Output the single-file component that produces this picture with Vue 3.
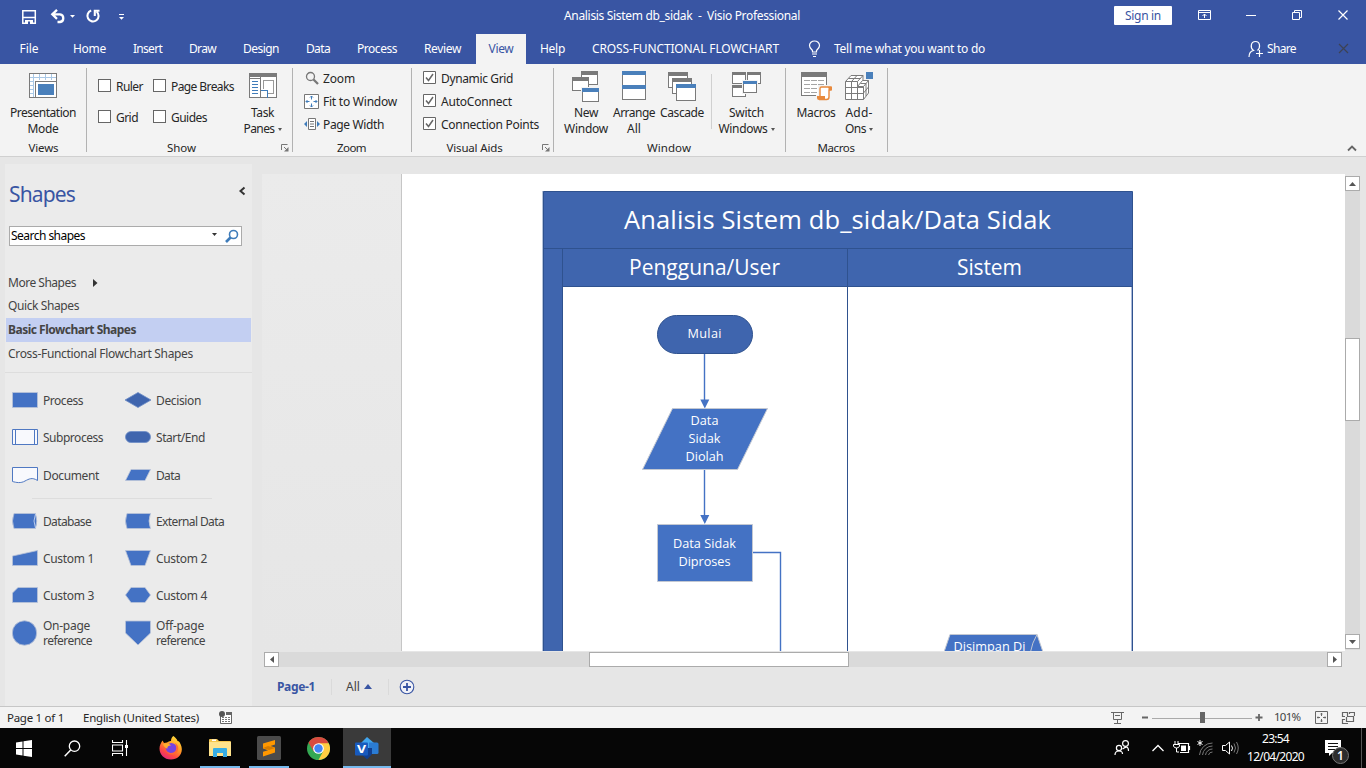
<script setup>
const fit = (el, w) => {
  const apply = () => {
    el.style.letterSpacing = '0px'
    const natural = el.getBoundingClientRect().width
    el.style.letterSpacing = `${(w - natural) / el.textContent.length}px`
  }
  apply()
  if (document.fonts && document.fonts.ready) document.fonts.ready.then(apply)
}
const vFit = { mounted: (el, { value }) => fit(el, value) }

const tabs = [
  { name: 'File', cell: 58, w: 19 },
  { name: 'Home', cell: 63, w: 33 },
  { name: 'Insert', cell: 53, w: 29 },
  { name: 'Draw', cell: 57, w: 27 },
  { name: 'Design', cell: 60, w: 36 },
  { name: 'Data', cell: 54, w: 24 },
  { name: 'Process', cell: 64, w: 40 },
  { name: 'Review', cell: 67, w: 37 },
  { name: 'View', cell: 50, w: 25, active: true },
  { name: 'Help', cell: 53, w: 25 },
  { name: 'CROSS-FUNCTIONAL FLOWCHART', cell: 213, w: 187 },
]
const showChecks = [
  { name: 'Ruler', w: 27 }, { name: 'Page Breaks', w: 63 },
  { name: 'Grid', w: 22 }, { name: 'Guides', w: 36 },
]
const aids = [
  { name: 'Dynamic Grid', w: 72 }, { name: 'AutoConnect', w: 71 }, { name: 'Connection Points', w: 98 },
]
const stencilsTop = [
  { id: 'process', name: 'Process', w: 40 }, { id: 'decision', name: 'Decision', w: 45 },
  { id: 'sub', name: 'Subprocess', w: 60 }, { id: 'start', name: 'Start/End', w: 49 },
  { id: 'doc', name: 'Document', w: 56 }, { id: 'data', name: 'Data', w: 24 },
]
const stencilsBottom = [
  { id: 'db', name: 'Database', w: 48 }, { id: 'ext', name: 'External Data', w: 68 },
  { id: 'c1', name: 'Custom 1', w: 51 }, { id: 'c2', name: 'Custom 2', w: 51 },
  { id: 'c3', name: 'Custom 3', w: 51 }, { id: 'c4', name: 'Custom 4', w: 51 },
]
const paths = {
  process: 'M.5 5.500H25.500V20.500H.500Z',
  decision: 'M0 13L13 5.500L26 13L13 20.500Z',
  start: 'M6 7.500H20A5.500 5.500 0 0 1 20 18.500H6A5.500 5.500 0 0 1 6 7.500Z',
  data: 'M6 7.500H25.500L20 18.500H.500Z',
  ext: 'M2 5.500H25.500Q22.500 13 25.500 20.500H2Q-1 13 2 5.500Z',
  c1: 'M.5 11L25.500 5.500V20.500H.500Z',
  c2: 'M.5 5.500H25.500L20 20.500H6Z',
  c3: 'M6 5.500H25.500V20.500H.500V11Z',
  c4: 'M6 5.500H20L25.500 13L20 20.500H6L.500 13Z',
}
</script>

<template>
  <div class="app">
    <header class="titlebar">
      <svg class="quick" width="130" height="32" viewBox="0 0 130 32">
        <g fill="none" stroke="#fff">
          <path d="M22.800 10.700H35.300M23 17.500H35M22.800 10V23.200H35.300V10" stroke-width="1.500" />
          <path d="M25 20H33V24H25Z" fill="#fff" stroke="none" />
          <path d="M28 21.500H30V24H28Z" fill="#3955a3" stroke="none" />
          <path d="M52.500 14.300H60A3.900 3.900 0 0 1 60 22H57.500M57 9.800L52.300 14.300L57 18.800" stroke-width="2.300" />
          <path d="M91.200 10.600A5.600 5.600 0 1 0 96.700 11.700M99.500 10.800H94.800V16" stroke-width="2.100" />
          <path d="M119 14.500H124" />
        </g>
        <path d="M70 15H75L72.500 17.700ZM119 17H124L121.500 19.700Z" fill="#fff" />
      </svg>
      <div class="doc-title"><span v-fit="236">Analisis Sistem db_sidak&nbsp; -&nbsp; Visio Professional</span></div>
      <div class="signin"><span v-fit="36">Sign in</span></div>
      <svg class="winctl" width="180" height="32" viewBox="1186 0 180 32" fill="none" stroke="#fff">
        <path d="M1198.500 10.500H1210.500V19.500H1198.500ZM1198.500 12.500H1210.500M1204.500 18V14M1202.500 16L1204.500 14L1206.500 16" />
        <path d="M1246 15.500H1256" />
        <path d="M1292.500 12.500H1299.500V19.500H1292.500ZM1294.500 12V10.500H1301.500V17.500H1300" />
        <path d="M1338.500 10.500L1347.500 19.500M1347.500 10.500L1338.500 19.500" stroke-width="1.200" />
      </svg>
    </header>

    <nav class="tabs">
      <div v-for="t in tabs" :key="t.name" class="tab" :class="{ active: t.active }" :style="{ width: t.cell + 'px' }">
        <span v-fit="t.w">{{ t.name }}</span>
      </div>
      <div class="tell">
        <svg width="13" height="18" viewBox="0 0 13 18" fill="none" stroke="#fff">
          <path d="M4.500 12V10.500C3.500 9 1.500 8 1.500 5.500A5 4.500 0 0 1 11.500 5.500C11.500 8 9.500 9 8.500 10.500V12ZM4 14H9M5 16.500H8" stroke-width="1.200" />
        </svg>
        <span v-fit="151">Tell me what you want to do</span>
      </div>
      <div class="share">
        <svg width="16" height="18" viewBox="0 0 16 18" fill="none" stroke="#fff">
          <path d="M1 17C1 13 3 11 5.500 10.500C2 8 2.500 1.500 7.500 1.500C12.500 1.500 12.500 8 9.500 10.500M8 13.500H15M11.500 10V17" stroke-width="1.200" />
        </svg>
        <span v-fit="29">Share</span>
        <svg class="close2" width="11" height="11" viewBox="0 0 11 11"><path d="M1 1L10 10M10 1L1 10" stroke="#3d4254" stroke-width="1.200" /></svg>
      </div>
    </nav>

    <section class="ribbon">
      <div class="group g-views">
        <div class="content">
          <div class="big">
            <svg width="28" height="32" viewBox="0 0 28 32" shape-rendering="crispEdges">
              <path d="M.5 1.500H27.500V25.500H.500Z" fill="#fff" stroke="#7a7a7a" />
              <path d="M1 5.500H27M1 9.500H5M1 13.500H5M1 17.500H5M1 21.500H5M4.500 2V25M10.500 2V8M16.500 2V8M22.500 2V8" stroke="#a9c8e6" />
              <path d="M6.500 9.500H27.500V25.500H6.500Z" fill="#fff" stroke="#7a7a7a" />
              <path d="M9 12H25V23H9Z" fill="#4a80bb" />
            </svg>
            <div class="line"><span v-fit="66">Presentation</span></div>
            <div class="line"><span v-fit="31">Mode</span></div>
          </div>
        </div>
        <div class="caption"><span v-fit="30">Views</span></div>
      </div>

      <div class="group g-show">
        <div class="content">
          <div class="checks">
            <label v-for="c in showChecks" :key="c.name" class="check"><i class="box"></i><span v-fit="c.w">{{ c.name }}</span></label>
          </div>
          <div class="big panes">
            <svg width="28" height="32" viewBox="0 0 28 32" shape-rendering="crispEdges">
              <path d="M.5 1.500H27.500V25.500H.500Z" fill="#fff" stroke="#7a7a7a" />
              <path d="M0 1H28V5H0Z" fill="#7a7a7a" />
              <path d="M11.500 5V25M0 6H11" stroke="#7a7a7a" />
              <path d="M3 9.500H9M3 12.500H9M3 15.500H9M3 18.500H9M3 21.500H9" stroke="#3f7cba" />
              <path d="M14.500 17V8.500H24.500V21.500H19" fill="none" stroke="#999" />
              <path d="M11.500 18.500H18.500V25.500" fill="none" stroke="#3f7cba" />
            </svg>
            <div class="line"><span v-fit="23">Task</span></div>
            <div class="line"><span v-fit="31">Panes</span><i class="caret"></i></div>
          </div>
        </div>
        <div class="caption"><span v-fit="29">Show</span></div>
        <svg class="launcher" width="8" height="8" viewBox="0 0 8 8"><path d="M.5 6V.500H6.500M3 3L6 6" fill="none" stroke="#777" /><path d="M7.500 3V7.500H3Z" fill="#777" /></svg>
      </div>

      <div class="group g-zoom">
        <div class="content rows">
          <div class="row">
            <svg width="16" height="16" viewBox="0 0 16 16"><circle cx="6.500" cy="5.500" r="4" fill="none" stroke="#777" stroke-width="1.300" /><path d="M9.500 8.500L14 13" stroke="#777" stroke-width="2.300" /></svg>
            <span v-fit="32">Zoom</span>
          </div>
          <div class="row">
            <svg width="16" height="16" viewBox="0 0 16 16"><path d="M.5.500H14.500V14.500H.500Z" fill="#fff" stroke="#777" /><path d="M7.500 2V5.500M6 3.500L7.500 2L9 3.500M7.500 13V9.500M6 11.500L7.500 13L9 11.500M2 7.500H5.500M3.500 6L2 7.500L3.500 9M13 7.500H9.500M11.500 6L13 7.500L11.500 9" fill="none" stroke="#3f7cba" /></svg>
            <span v-fit="74">Fit to Window</span>
          </div>
          <div class="row">
            <svg width="16" height="16" viewBox="0 0 16 16"><path d="M4.500 1.500H11.500V12.500H4.500Z" fill="#fff" stroke="#777" /><path d="M6 4.500H10M6 7H10M6 9.500H10" stroke="#777" /><path d="M3 4V10L0 7ZM13 4V10L16 7Z" fill="#3f7cba" /></svg>
            <span v-fit="61">Page Width</span>
          </div>
        </div>
        <div class="caption"><span v-fit="29">Zoom</span></div>
      </div>

      <div class="group g-aids">
        <div class="content rows">
          <label v-for="a in aids" :key="a.name" class="row">
            <svg class="box" width="13" height="13" viewBox="0 0 13 13"><path d="M.5.500H12.500V12.500H.500Z" fill="#fff" stroke="#666" /><path d="M3 6.500L5.500 9.500L10 3" fill="none" stroke="#666" stroke-width="1.500" /></svg>
            <span v-fit="a.w">{{ a.name }}</span>
          </label>
        </div>
        <div class="caption"><span v-fit="56">Visual Aids</span></div>
        <svg class="launcher" width="8" height="8" viewBox="0 0 8 8"><path d="M.5 6V.500H6.500M3 3L6 6" fill="none" stroke="#777" /><path d="M7.500 3V7.500H3Z" fill="#777" /></svg>
      </div>

      <div class="group g-window">
        <div class="content">
          <div class="big b-new">
            <svg width="28" height="32" viewBox="0 0 28 32" shape-rendering="crispEdges">
              <g fill="#fff" stroke="#7a7a7a"><path d="M9.500-.500H25.500V12.500H9.500Z" /><path d="M.5 5.500H16.500V18.500H.500Z" /></g>
              <path d="M9-1H26V3H9ZM0 5H17V9H0Z" fill="#7a7a7a" />
              <path d="M9 15H28V31H9Z" fill="#f3f3f3" />
              <path d="M10.500 16.500H26.500V29.500H10.500Z" fill="#fff" stroke="#7a7a7a" /><path d="M10 16H27V20H10Z" fill="#4a80bb" />
            </svg>
            <div class="line"><span v-fit="24">New</span></div>
            <div class="line"><span v-fit="44">Window</span></div>
          </div>
          <div class="big b-arr">
            <svg width="24" height="32" viewBox="0 0 24 32" shape-rendering="crispEdges">
              <path d="M.5-.500H23.500V27.500H.500Z" fill="#fff" stroke="#7a7a7a" /><path d="M0-1H24V3H0ZM0 13H24V17H0Z" fill="#4a80bb" />
            </svg>
            <div class="line"><span v-fit="42">Arrange</span></div>
            <div class="line"><span v-fit="14">All</span></div>
          </div>
          <div class="big b-cas">
            <svg width="28" height="32" viewBox="0 0 28 32" shape-rendering="crispEdges">
              <g fill="#fff" stroke="#7a7a7a"><path d="M.5.500H19.500V15.500H.500Z" /><path d="M4.500 6.500H23.500V21.500H4.500Z" /><path d="M8.500 12.500H27.500V28.500H8.500Z" /></g>
              <path d="M0 0H20V4H0ZM4 6H24V10H4Z" fill="#7a7a7a" /><path d="M8 12H28V16H8Z" fill="#4a80bb" />
            </svg>
            <div class="line"><span v-fit="44">Cascade</span></div>
          </div>
          <i class="minisep"></i>
          <div class="big b-sw">
            <svg width="30" height="32" viewBox="0 0 30 32" shape-rendering="crispEdges">
              <g fill="#fff" stroke="#7a7a7a"><path d="M.5.500H13.500V11.500H.500Z" /><path d="M15.500.500H28.500V11.500H15.500Z" /><path d="M.5 13.500H13.500V24.500H.500Z" /></g>
              <path d="M0 0H14V3H0ZM15 0H29V3H15ZM0 13H14V16H0Z" fill="#7a7a7a" />
              <path d="M10 8H26V22H10Z" fill="#f3f3f3" />
              <path d="M11.500 9.500H24.500V20.500H11.500Z" fill="#fff" stroke="#7a7a7a" /><path d="M11 9H25V12H11Z" fill="#4a80bb" />
            </svg>
            <div class="line"><span v-fit="35">Switch</span></div>
            <div class="line"><span v-fit="49">Windows</span><i class="caret"></i></div>
          </div>
        </div>
        <div class="caption"><span v-fit="44">Window</span></div>
      </div>

      <div class="group g-macros">
        <div class="content">
          <div class="big b-mac">
            <svg width="31" height="32" viewBox="0 0 31 32">
              <g shape-rendering="crispEdges">
                <path d="M.5.500H25.500V23.500H.500Z" fill="#fff" stroke="#7a7a7a" /><path d="M0 0H26V5H0Z" fill="#7a7a7a" />
                <path d="M3 8.500H24M3 12.500H24M3 16.500H24M3 20.500H16" stroke="#a5a5a5" stroke-dasharray="6 1" />
              </g>
              <path d="M17 13H31V29H15V23H17Z" fill="#f3f3f3" />
              <path d="M19 25V16.500Q19 15 20.500 15H30V18H28V25Q28 27.500 25.500 27.500H18" fill="#fff" stroke="#e8893c" stroke-width="1.400" />
              <path d="M16 24H24V28H18Q16 28 16 26ZM27 15H31V18H28Z" fill="#e8893c" />
            </svg>
            <div class="line"><span v-fit="39">Macros</span></div>
          </div>
          <div class="big b-add">
            <svg width="28" height="32" viewBox="0 0 28 32">
              <path d="M.5 9.500L6 3.500H18.500L19 8.500H24.500L23.500 21.500L18.500 27.500H.500Z" fill="#fff" />
              <path d="M.5 9.500H12.500V14.500H18.500V27.500H.500ZM.5 15.500H18M.5 21.500H18.500M6.500 9.500V27.500M12.500 14.500V27.500M.5 9.500L6 3.500H18M12.500 9.500L18 3.500V8.500M6.500 9.500L12 3.500M3.500 6.500H15.500M12.500 14.500L17.500 8.500H23.500V21L18.500 27.500M18.500 14.500L23.500 8.500M15.500 11.500H21V24M18.500 21L23.500 15" fill="none" stroke="#7a7a7a" />
              <path d="M21 0H28V7H21Z" fill="#4a80bb" />
            </svg>
            <div class="line"><span v-fit="27">Add-</span></div>
            <div class="line"><span v-fit="21">Ons</span><i class="caret"></i></div>
          </div>
        </div>
        <div class="caption"><span v-fit="37">Macros</span></div>
      </div>
      <svg class="collapse" width="10" height="7" viewBox="0 0 10 7"><path d="M1 5.500L5 1.500L9 5.500" fill="none" stroke="#666" stroke-width="1.800" /></svg>
    </section>

    <main class="work">
      <aside class="shapes">
        <div class="head">
          <span v-fit="66" class="h">Shapes</span>
          <svg width="8" height="10" viewBox="0 0 8 10"><path d="M6.500 1.500L2.500 5L6.500 8.500" fill="none" stroke="#333" stroke-width="2" /></svg>
        </div>
        <div class="search">
          <span v-fit="74">Search shapes</span>
          <svg width="30" height="16" viewBox="0 0 30 16"><path d="M2 5H7L4.500 8Z" fill="#333" /><circle cx="23.500" cy="6.500" r="4" fill="none" stroke="#3f7cba" stroke-width="1.600" /><path d="M20.500 9.500L16 14" stroke="#3f7cba" stroke-width="2.600" /></svg>
        </div>
        <div class="stencils">
          <div class="st"><span v-fit="68">More Shapes</span><svg width="5" height="8" viewBox="0 0 5 8"><path d="M0 0L4.500 4L0 8Z" fill="#333" /></svg></div>
          <div class="st"><span v-fit="71">Quick Shapes</span></div>
          <div class="st on"><span v-fit="128">Basic Flowchart Shapes</span></div>
          <div class="st"><span v-fit="185">Cross-Functional Flowchart Shapes</span></div>
        </div>
        <div class="grid first">
          <div v-for="s in stencilsTop" :key="s.id" class="item">
            <svg width="26" height="26" viewBox="0 0 26 26">
              <g v-if="s.id === 'sub'" fill="#f8f9fd" stroke="#4f78c2"><path d="M.5 5.500H25.500V20.500H.500Z" /><path d="M3.500 5V21M22.500 5V21" /></g>
              <path v-else-if="s.id === 'doc'" d="M.5 5.500H25.500V18.500C20 15 17 17 13 19C9 21.500 4 20.500 .500 19.500Z" fill="#f8f9fd" stroke="#4f78c2" />
              <path v-else :d="paths[s.id]" :class="s.id === 'decision' || s.id === 'start' ? 'deep' : 'plain'" />
            </svg>
            <span v-fit="s.w">{{ s.name }}</span>
          </div>
        </div>
        <div class="grid second">
          <div v-for="s in stencilsBottom" :key="s.id" class="item">
            <svg width="26" height="26" viewBox="0 0 26 26">
              <g v-if="s.id === 'db'"><path d="M2 5.500H23.500Q26 13 23.500 20.500H2Q-1 13 2 5.500Z" class="plain" /><path d="M23.500 6Q20.500 13 23.500 20" fill="none" stroke="#b8cbee" /></g>
              <path v-else :d="paths[s.id]" class="plain" />
            </svg>
            <span v-fit="s.w">{{ s.name }}</span>
          </div>
        </div>
        <div class="grid third">
          <div class="item">
            <svg width="26" height="26" viewBox="0 0 26 26"><circle cx="12.500" cy="13" r="12.200" class="plain" /></svg>
            <div><div><span v-fit="47">On-page</span></div><div><span v-fit="49">reference</span></div></div>
          </div>
          <div class="item">
            <svg width="26" height="26" viewBox="0 0 26 26"><path d="M.5 1H25.500V13L13 25L.500 13Z" class="plain" /></svg>
            <div><div><span v-fit="48">Off-page</span></div><div><span v-fit="49">reference</span></div></div>
          </div>
        </div>
      </aside>

      <div class="editor">
        <div class="viewrow">
          <svg class="canvas" width="1083" height="477" viewBox="262 174 1083 477">
            <defs><linearGradient id="desk" x1="0" y1="0" x2="0" y2="1"><stop offset="0" stop-color="#ebebeb" /><stop offset="1" stop-color="#e6e6e6" /></linearGradient></defs>
            <rect x="262" y="174" width="140" height="477" fill="url(#desk)" />
            <rect x="402" y="174" width="943" height="477" fill="#fff" />
            <path d="M401.500 174V651" stroke="#c6c6c6" />
            <path d="M543 191.500H1132.500V286.500H562.500V651H543Z" fill="#3f65ae" />
            <g fill="none" stroke="#2f528f">
              <path d="M543.500 651V191.500H1132.500V286.500M543 248.500H1132M562.500 651V248.500M562 286.500H1132M847.500 248V651" />
              <path d="M542.500 191V651" stroke="#b4c2da" />
              <path d="M1131.500 287V651" stroke="#a9b9d8" />
              <path d="M1132.500 286V651" />
            </g>
            <rect x="657.500" y="315.500" width="95" height="38" rx="19" fill="#3f65ae" stroke="#2f528f" />
            <g fill="none" stroke="#4472c4" stroke-width="1.400">
              <path d="M704.500 354V402M704.500 469V518M753 552.500H780.500V651" />
            </g>
            <path d="M700.300 399.500H709.300L704.800 408.500ZM700.300 515H709.300L704.800 524Z" fill="#4472c4" />
            <g fill="#4472c4" stroke="#c3c8d2">
              <path d="M672.500 408.500H767.500L737.500 469.500H642.500Z" />
              <path d="M657.500 524.500H752.500V581.500H657.500Z" />
              <path d="M943 655L950 634.500H1037L1044 655Z" />
              <path d="M1037 634.500Q1032 643 1030.500 652" fill="none" />
            </g>
            <g class="dtext">
              <text x="624" y="229" font-size="25.500" textLength="427">Analisis Sistem db_sidak/Data Sidak</text>
              <text x="629" y="275" font-size="21" textLength="151">Pengguna/User</text>
              <text x="957" y="275" font-size="21" textLength="65">Sistem</text>
              <g font-size="12.700" class="body">
                <text x="687.500" y="338" textLength="34">Mulai</text>
                <text x="690.500" y="425" textLength="28">Data</text>
                <text x="688.500" y="443" textLength="32">Sidak</text>
                <text x="685.500" y="461" textLength="38">Diolah</text>
                <text x="673" y="548" textLength="63">Data Sidak</text>
                <text x="678.500" y="566" textLength="52">Diproses</text>
                <text x="953.500" y="651" textLength="72">Disimpan Di</text>
              </g>
            </g>
          </svg>
          <div class="vscroll">
            <div class="sbtn"><svg width="7" height="4" viewBox="0 0 7 4"><path d="M0 4L3.500 0L7 4Z" fill="#555" /></svg></div>
            <div class="vthumb"></div>
            <div class="sbtn"><svg width="7" height="4" viewBox="0 0 7 4"><path d="M0 0L3.500 4L7 0Z" fill="#555" /></svg></div>
          </div>
        </div>
        <div class="hscroll">
          <div class="sbtn"><svg width="4" height="7" viewBox="0 0 4 7"><path d="M4 0L0 3.500L4 7Z" fill="#555" /></svg></div>
          <div class="hthumb"></div>
          <div class="sbtn"><svg width="4" height="7" viewBox="0 0 4 7"><path d="M0 0L4 3.500L0 7Z" fill="#555" /></svg></div>
        </div>
        <div class="pagetabs">
          <span class="pg"><span v-fit="38">Page-1</span></span>
          <span class="all"><span v-fit="14">All</span><svg width="8" height="5" viewBox="0 0 8 5"><path d="M0 5L4 0L8 5Z" fill="#3955a3" /></svg></span>
          <svg width="16" height="16" viewBox="0 0 16 16"><circle cx="8" cy="8" r="6.800" fill="#f1f2f7" stroke="#3955a3" stroke-width="1.100" /><path d="M4 8H12M8 4V12" stroke="#3955a3" stroke-width="1.800" /></svg>
        </div>
      </div>
    </main>

    <footer class="status">
      <span class="s1"><span v-fit="57">Page 1 of 1</span></span>
      <span class="s2"><span v-fit="116">English (United States)</span></span>
      <svg class="rec" width="13" height="13" viewBox="0 0 13 13"><path d="M1.500 5V12.500H12.500V1.500H7" fill="#fff" stroke="#666" /><path d="M7 1H13V4H7Z" fill="#666" /><circle cx="3" cy="3" r="3" fill="#555" /><path d="M3 6.500H11M3 8.500H11M3 10.500H11" stroke="#777" stroke-dasharray="2 1" /></svg>
      <svg class="zoombar" width="250" height="22" viewBox="1105 706 250 22">
        <g fill="none" stroke="#666">
          <path d="M1111 711.500H1124M1113.500 712V718.500H1121.500V712M1115 714.500H1120M1117.500 719V722.500M1114 722.500H1121" />
          <path d="M1142 716.500H1148M1255.500 716.500H1262.500M1259 713V720" stroke-width="1.800" />
          <path d="M1152 717.500H1252" stroke="#aaa" />
          <path d="M1315.500 710.500H1327.500V722.500H1315.500Z" />
          <path d="M1321.500 712V715M1321.500 721V718M1317 716.500H1320M1326 716.500H1323M1320.500 713H1322.500M1320.500 720H1322.500M1318 715.500V717.500M1325 715.500V717.500" />
          <path d="M1342.500 715.500V711.500H1347.500V715.500M1349.500 713V711.500H1354.500V715M1346.500 716V720.500H1353.500V715.500H1347M1342.500 716V715.500H1345M1345 718.500H1342.500V722.500H1348" stroke-width="1.200" />
        </g>
        <rect x="1200" y="711" width="5" height="11" fill="#666" />
        <text x="1274" y="720" font-size="11.500" textLength="27" fill="#444">101%</text>
      </svg>
    </footer>

    <div class="taskbar">
      <div class="tk"><svg width="16" height="17" viewBox="0 0 16 17"><path d="M0 2.500L6.500 1.500V8H0ZM7.500 1.300L16 0V8H7.500ZM0 9H6.500V15.500L0 14.500ZM7.500 9H16V17L7.500 15.700Z" fill="#fff" /></svg></div>
      <div class="tk"><svg width="17" height="17" viewBox="0 0 17 17"><circle cx="10.500" cy="6.200" r="5.200" fill="none" stroke="#fff" stroke-width="1.300" /><path d="M6.700 10L.700 16.200" stroke="#fff" stroke-width="1.500" /></svg></div>
      <div class="tk"><svg width="17" height="16" viewBox="0 0 17 16"><path d="M.5 0V2.500H10.500V0M.5 5H10.500V11H.500ZM.5 16V13.500H10.500V16M14.500 0V16" fill="none" stroke="#fff" stroke-width="1.100" /><path d="M13 5H16V8H13Z" fill="#fff" /></svg></div>
      <div class="tk gap">
        <svg width="24" height="24" viewBox="0 0 24 24">
          <defs>
            <linearGradient id="fx" x1=".85" y1="0" x2=".3" y2="1"><stop offset="0" stop-color="#ffe83e" /><stop offset=".45" stop-color="#ff9a25" /><stop offset=".75" stop-color="#ff4a42" /><stop offset="1" stop-color="#e3267c" /></linearGradient>
          </defs>
          <path d="M14.500 0C17 2 18 3.500 18.500 5C20 5 20.500 6 21 7C26 16 20 23.500 12 23.500C5 23.500 .500 18.500 .500 12.500C.500 9.500 2 6.500 3.500 4.500L5 7L8 6.500C9.500 5 12 5 12 5C12 2.500 13 1 14.500 0Z" fill="url(#fx)" />
          <circle cx="12.300" cy="12.300" r="5.400" fill="#7543e0" />
          <path d="M4 8.500C7 6.500 9.500 7 12 9.500C9 9.500 8 11 8.500 12.500C6.500 12.500 5 10.500 4 8.500Z" fill="#ffad2e" />
          <path d="M7 14.500C10 18 15 17.500 17 14C18 11 17 8.500 15.500 7C19.500 8 20.500 13.500 17.500 16.800C14 20 8.500 18.500 7 14.500Z" fill="#ff6835" />
        </svg>
      </div>
      <div class="tk run"><svg width="22" height="20" viewBox="0 0 22 20"><path d="M0 2Q0 1 1 1H8L10 3H21Q22 3 22 4V18H0Z" fill="#f5c64e" /><path d="M0 4H22V18H0Z" fill="#ffe38c" /><path d="M3 1.500H7V3H3Z" fill="#fff" /><path d="M4 19V11Q4 10 5 10H17Q18 10 18 11V19H14V15H8V19Z" fill="#37aee5" /></svg></div>
      <div class="tk run"><svg width="24" height="24" viewBox="0 0 24 24"><rect width="24" height="24" rx="1.500" fill="#4b4b4b" /><path d="M6 7.500L18 4V8.500L13.500 10L18 11.500V16.500L6 20.500V15.800L11 14.200L6 12.500Z" fill="#ff9800" /><path d="M6 12L11 10L18 12L12 14Z" fill="#d67c00" /></svg></div>
      <div class="tk"><svg width="23" height="23" viewBox="0 0 24 24"><circle cx="12" cy="12" r="12" fill="#34a853" /><path d="M12 12L1.600 6A12 12 0 0 1 22.400 6Z" fill="#d94b3f" /><path d="M1.600 6L7 15L12 12V6Z" fill="#d94b3f" /><path d="M12 6.500H22.700A12 12 0 0 1 12 24L17 14.500Z" fill="#ffcd42" /><circle cx="12" cy="12" r="5.600" fill="#fff" /><circle cx="12" cy="12" r="4.400" fill="#4285f4" /></svg></div>
      <div class="tk run wide"><svg width="24" height="23" viewBox="0 0 24 23"><path d="M12 0L19 6L12 13L6 6Z" fill="#41a5ee" /><path d="M14 5.500H22Q23.500 5.500 23.500 7V15.500Q23.500 17 22 17H14Z" fill="#2b7cd3" /><path d="M8 11H17V17L13 21.500Q12 22.500 11 21.500L6 17Z" fill="#103f91" /><rect x="0" y="5.500" width="13" height="13" rx="1" fill="#185abd" /><text x="2" y="16" font-size="11" font-weight="700" fill="#fff" textLength="9" lengthAdjust="spacingAndGlyphs">V</text></svg></div>
      <div class="tray">
        <svg width="135" height="40" viewBox="1110 728 135 40" fill="none" stroke="#fff">
          <g stroke-width="1.200"><circle cx="1120" cy="748" r="2.600" /><circle cx="1126.500" cy="743.500" r="2.900" /><path d="M1116 755Q1116 751 1120 751Q1123.500 751 1123.500 754M1123.500 749Q1129.500 744.500 1129.500 751" /></g>
          <path d="M1153.500 751L1159 745.500L1164.500 751" stroke-width="1.300" />
          <path d="M1179 743.500H1189.500V752.500H1181M1190.500 746V750" stroke-width="1.200" /><path d="M1182 745.500H1187V751H1182Z" fill="#fff" stroke="none" /><path d="M1176 741V744M1179 741V744M1174.500 744.500H1180.500V746Q1180 748 1177.500 748Q1175 748 1174.500 746ZM1177.500 748V752H1180" />
          <path d="M1201 740V746M1198.500 741.500L1203.500 744.500M1203.500 741.500L1198.500 744.500" />
          <g stroke="#777"><path d="M1200.500 755A13 13 0 0 1 1213.500 743M1203.500 755A10 10 0 0 1 1213.500 746M1206.500 755A7 7 0 0 1 1213.500 749M1209.500 755A4 4 0 0 1 1213.500 752" /></g>
          <path d="M1223.500 745.500H1226.500L1230.500 742V754L1226.500 750.500H1223.500ZM1232.500 745.500Q1234.500 748 1232.500 751" /><path d="M1235 743.500Q1238 748 1235 752.500M1237.500 742Q1241 748 1237.500 754" stroke="#777" />
        </svg>
        <div class="clock"><div><span v-fit="27">23:54</span></div><div><span v-fit="57">12/04/2020</span></div></div>
        <svg width="58" height="40" viewBox="1308 728 58 40"><path d="M1325 740H1341V753H1332L1329 756V753H1325Z" fill="#fff" /><path d="M1328 743.500H1338M1328 746.500H1338M1328 749.500H1335" stroke="#111" /><circle cx="1340.500" cy="755.500" r="8" fill="#2d2d2d" stroke="#777" /><text x="1337" y="759.500" fill="#fff" font-size="12" font-weight="600">1</text><path d="M1361.500 728V768" stroke="#555" /></svg>
      </div>
    </div>
  </div>
</template>

<style>
body { margin: 0; overflow: hidden; }
</style>
<style scoped>
.app { width: 1366px; height: 768px; display: flex; flex-direction: column; background: #e6e6e6; font-family: "Noto Sans", "Open Sans", sans-serif; font-size: 12px; line-height: 16px; color: #262626; overflow: hidden; }
.app span { white-space: nowrap; }
svg { display: block; flex: none; }
.titlebar { height: 32px; display: flex; align-items: center; background: #3955a3; color: #fff; flex: none; }
.doc-title { margin-left: 434px; width: 550px; }
.signin { width: 58px; height: 19px; background: #fff; color: #3955a3; display: flex; align-items: center; justify-content: center; border-radius: 1px; margin-top: -1px; }
.winctl { margin-left: 14px; }
.tabs { height: 32px; display: flex; align-items: stretch; background: #3955a3; color: #fff; flex: none; }
.tab { display: flex; align-items: center; justify-content: center; padding-top: 1px; box-sizing: border-box; }
.tab.active { background: #f3f3f3; color: #3955a3; height: 30px; margin-top: 2px; padding-top: 0; padding-bottom: 1px; }
.tell { display: flex; align-items: center; gap: 13px; padding-left: 16px; padding-top: 1px; width: 440px; }
.share { display: flex; align-items: center; gap: 3px; padding-top: 1px; }
.close2 { margin-left: 39px; }
.ribbon { height: 92px; display: flex; background: #f3f3f3; border-bottom: 1px solid #d0d0d0; flex: none; position: relative; }
.group { display: flex; flex-direction: column; position: relative; box-sizing: border-box; }
.group::after { content: ""; position: absolute; right: 0; top: 4px; height: 84px; width: 1px; background: #b2b2b2; }
.content { height: 76px; display: flex; flex: none; }
.caption { height: 16px; display: flex; justify-content: center; font-size: 11.500px; }
.g-views { width: 87px; } .g-show { width: 206px; } .g-zoom { width: 119px; } .g-aids { width: 142px; } .g-window { width: 232px; } .g-macros { width: 102px; }
.g-show .caption, .g-aids .caption { padding-right: 17px; }
.g-zoom .caption, .g-window .caption, .g-macros .caption { padding-right: 2px; }
.big { display: flex; flex-direction: column; align-items: center; padding-top: 8px; box-sizing: border-box; }
.big svg { margin-bottom: 1px; overflow: visible; }
.g-views .big { width: 86px; }
.line { display: flex; align-items: center; height: 16px; }
.caret { width: 0; height: 0; border: 2.500px solid transparent; border-top: 3px solid #555; border-bottom: 0; margin-left: 3px; }
.checks { display: grid; grid-template-columns: 55px 90px; grid-auto-rows: 31px; padding: 6px 0 0 11px; height: 62px; }
.check { display: flex; align-items: center; gap: 5px; }
.check span { padding-top: 2px; }
.check .box { width: 11px; height: 11px; border: 1px solid #666; background: #fff; }
.panes { width: 39px; }
.launcher { position: absolute; right: 4px; bottom: 4px; }
.rows { flex-direction: column; padding-top: 3px; box-sizing: border-box; }
.row { height: 23px; display: flex; align-items: center; }
.g-zoom .row { padding-left: 11px; gap: 3px; }
.g-aids .row { padding-left: 11px; gap: 5px; }
.g-aids .row .box { margin-bottom: 2px; }
.b-new { width: 48px; margin-left: 8px; } .b-arr { width: 48px; } .b-cas { width: 48px; }
.minisep { width: 1px; height: 55px; background: #d0d0d0; margin: 10px 5px 0 5px; }
.b-sw { width: 59px; }
.b-mac { width: 42px; margin-left: 9px; } .b-add { width: 30px; margin-left: 7px; }
.collapse { margin: 81px 0 0 459px; }
.work { height: 549px; display: flex; flex: none; padding-left: 5px; }
.shapes { width: 247px; margin-top: 7px; background: #ebebeb; color: #444; flex: none; }
.head { height: 60px; display: flex; align-items: center; justify-content: space-between; padding: 0 6px 0 4px; }
.h { font-size: 21px; color: #3955a3; line-height: 30px; }
.head svg { margin-top: -6px; }
.search { margin: 2px 0 0 4px; height: 18px; border: 1px solid #ababab; background: #fff; display: flex; align-items: center; justify-content: space-between; padding: 0 1px; width: 229px; color: #000; }
.stencils { padding: 25px 1px 6px; border-bottom: 1px solid #ddd; }
.st { height: 24px; display: flex; align-items: center; gap: 17px; padding-left: 2px; }
.st:first-child { height: 23px; }
.st.on { background: #c3cff2; font-weight: 700; }
.grid { display: grid; grid-template-columns: 113px 120px; padding-left: 7px; }
.first { grid-auto-rows: 37.500px; padding-top: 8px; padding-bottom: 4px; }
.second { grid-auto-rows: 37px; padding-top: 5px; position: relative; }
.second::before { content: ""; position: absolute; left: 27px; top: 0; width: 180px; height: 1px; background: #ddd; }
.first .item span, .second .item span { padding-top: 2px; }
.third { padding-top: 4px; line-height: 15px; }
.item { display: flex; align-items: center; gap: 5px; }
.item svg { margin-left: -.5px; margin-right: .5px; }
.plain { fill: #4472c4; stroke: #b9c3d8; stroke-width: .8; }
.deep { fill: #3f65ae; stroke: #6f8ec6; stroke-width: .8; }
.editor { margin-left: 10px; margin-top: 17px; width: 1104px; display: flex; flex-direction: column; }
.viewrow { display: flex; height: 477px; }
.vscroll { width: 15px; height: 474px; margin-top: 2px; background: #dadada; display: flex; flex-direction: column; }
.sbtn { width: 13px; height: 13px; border: 1px solid #ababab; background: #fff; display: flex; align-items: center; justify-content: center; flex: none; }
.vthumb { margin: 147px 0 213px; height: 81px; border: 1px solid #ababab; background: #fff; }
.hscroll { margin: 1px 0 0 2px; width: 1078px; height: 15px; background: #dadada; display: flex; }
.hthumb { margin: 0 478px 0 310px; width: 258px; border: 1px solid #ababab; background: #fff; }
.pagetabs { height: 39px; display: flex; align-items: center; }
.pg { color: #3955a3; font-weight: 700; padding: 0 16px 0 15px; border-right: 1px solid #dadada; }
.all { display: flex; align-items: center; gap: 4px; padding: 0 16px 0 14px; border-right: 1px solid #dadada; margin-right: 10px; color: #444; }
.status { height: 21px; border-top: 1px solid #c6c6c6; background: #f3f3f3; display: flex; align-items: center; flex: none; font-size: 11.500px; }
.s1 { margin-left: 7px; width: 76px; } .s2 { width: 136px; }
.zoombar { margin-left: 873px; }
.taskbar { height: 40px; background: #060606; display: flex; flex: none; color: #fff; }
.tk { width: 48px; height: 40px; display: flex; align-items: center; justify-content: center; margin-right: 1px; position: relative; }
.tk:nth-child(-n+3) { margin-right: 0; }
.gap { margin-left: 3px; }
.run::after { content: ""; position: absolute; left: 4px; right: 4px; bottom: 0; height: 2px; background: #76b9ed; }
.wide { background: #3a3a3a; }
.wide::after { left: 0; right: 0; }
.tray { display: flex; margin-left: auto; }
.clock { width: 63px; text-align: center; padding: 2px 1px 0 0; line-height: 18px; }
.clock div { display: flex; justify-content: center; }
.dtext { fill: #fff; font-family: "Open Sans", "Noto Sans", sans-serif; }
.body { font-weight: 500; }
</style>
